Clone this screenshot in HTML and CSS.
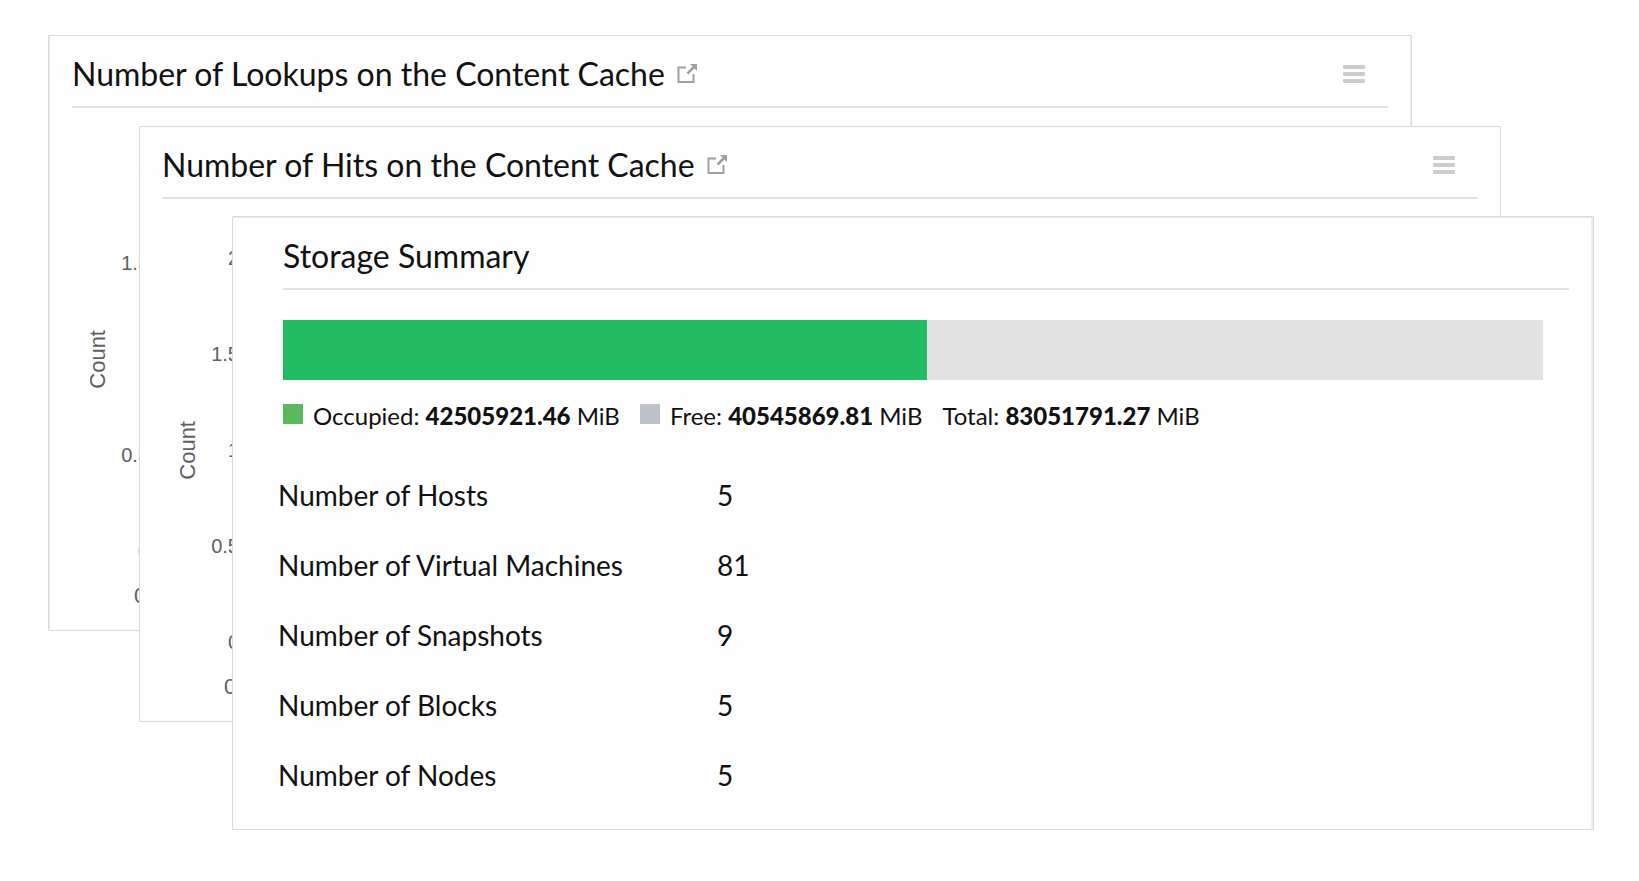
FILE: index.html
```html
<!DOCTYPE html>
<html lang="en">
<head>
<meta charset="utf-8">
<meta name="viewport" content="width=device-width, initial-scale=1">
<title>Storage Summary</title>
<link rel="stylesheet" href="styles.css">
</head>
<body>
<main class="stack">
  <section class="card card-back">
    <header class="card-header">
      <h2 class="card-title">Number of Lookups on the Content Cache</h2>
      <a class="open-link" href="#lookups" aria-label="Open lookups chart">
        <svg class="open-icon" viewBox="0 0 20 20" aria-hidden="true"><path d="M9 3.500H1.500v14.500h15v-8" fill="none" stroke="currentColor" stroke-width="2"/><path d="M10.500 9.500l7-7" stroke="currentColor" stroke-width="2.500"/><path d="M13 0h7v7z" fill="currentColor"/></svg>
      </a>
      <button class="menu-button" type="button" aria-label="Chart menu"><span class="menu-bar"></span><span class="menu-bar"></span><span class="menu-bar"></span></button>
    </header>
    <div class="chart" id="lookups">
      <div class="axis-title">Count</div>
      <div class="ticks"><span>2</span><span>1.5</span><span>1</span><span>0.5</span><span>0</span></div>
      <div class="time-label">0</div>
    </div>
  </section>

  <section class="card card-middle">
    <header class="card-header">
      <h2 class="card-title">Number of Hits on the Content Cache</h2>
      <a class="open-link" href="#hits" aria-label="Open hits chart">
        <svg class="open-icon" viewBox="0 0 20 20" aria-hidden="true"><path d="M9 3.500H1.500v14.500h15v-8" fill="none" stroke="currentColor" stroke-width="2"/><path d="M10.500 9.500l7-7" stroke="currentColor" stroke-width="2.500"/><path d="M13 0h7v7z" fill="currentColor"/></svg>
      </a>
      <button class="menu-button" type="button" aria-label="Chart menu"><span class="menu-bar"></span><span class="menu-bar"></span><span class="menu-bar"></span></button>
    </header>
    <div class="chart" id="hits">
      <div class="axis-title">Count</div>
      <div class="ticks"><span>2</span><span>1.5</span><span>1</span><span>0.5</span><span>0</span></div>
      <div class="time-label">0</div>
    </div>
  </section>

  <section class="card card-front">
    <header class="card-header">
      <h2 class="card-title">Storage Summary</h2>
    </header>
    <div class="usage-bar"><div class="usage-fill" style="width: 51.1%"></div></div>
    <div class="legend">
      <div class="legend-item"><span class="swatch swatch-occupied"></span><span>Occupied: <strong>42505921.46</strong> MiB</span></div>
      <div class="legend-item"><span class="swatch swatch-free"></span><span>Free: <strong>40545869.81</strong> MiB</span></div>
      <div class="legend-item"><span>Total: <strong>83051791.27</strong> MiB</span></div>
    </div>
    <table class="facts">
      <tbody>
        <tr><th scope="row">Number of Hosts</th><td>5</td></tr>
        <tr><th scope="row">Number of Virtual Machines</th><td>81</td></tr>
        <tr><th scope="row">Number of Snapshots</th><td>9</td></tr>
        <tr><th scope="row">Number of Blocks</th><td>5</td></tr>
        <tr><th scope="row">Number of Nodes</th><td>5</td></tr>
      </tbody>
    </table>
  </section>
</main>
</body>
</html>
```
FILE: styles.css
```css
* {
  box-sizing: border-box;
}

body {
  margin: 0;
  background: #fff;
  color: #111;
  font-family: Lato, "Open Sans", sans-serif;
}

/* The three cards share one grid cell and are fanned out by margins. */
.stack {
  display: grid;
  align-items: start;
  padding: 35px 45px 50px 48px;
}

.card {
  grid-area: 1 / 1;
  padding: 0 23px;
  border: 1px solid #d9d9d9;
  border-radius: 1px;
  background: #fefefe;
}

.card-back {
  margin-right: 182px;
  box-shadow: inset 1px 0 #eee, inset -1px 0 #eee;
}

.card-middle {
  margin: 91px 93px 0 91px;
  padding: 0 22px;
}

.card-front {
  margin: 181px 0 0 184px;
  padding: 1px 24px 19px 50px;
  box-shadow: inset -2px 0 #eee, inset 0 1px #eee;
}

.card-header {
  display: flex;
  align-items: center;
  height: 72px;
  padding-top: 6px;
  border-bottom: 2px solid #e2e2e2;
}

.card-title {
  margin: 0;
  font-size: 32px;
  font-weight: 400;
  line-height: 40px;
}

.open-link {
  margin-left: 12px;
  color: #9f9f9f;
}

.open-icon {
  display: block;
  width: 20px;
  height: 20px;
}

.menu-button {
  display: flex;
  flex-direction: column;
  gap: 3px;
  margin-left: auto;
  margin-right: 23px;
  padding: 0;
  border: 0;
  background: none;
}

.menu-bar {
  width: 22px;
  height: 4px;
  border-radius: 1px;
  background: #ccc;
}

.chart {
  display: grid;
  grid-template-columns: 24px 39px;
  row-gap: 21px;
  padding: 47px 0 22px 14px;
  color: #606060;
  font-family: "Liberation Sans", Arial, sans-serif;
  font-size: 20px;
  line-height: 24px;
}

.axis-title {
  justify-self: center;
  align-self: center;
  font-size: 22px;
  writing-mode: vertical-rl;
  transform: rotate(180deg);
}

.ticks {
  display: flex;
  flex-direction: column;
  gap: 72px;
  text-align: right;
}

.time-label {
  grid-column: 2;
  padding-left: 24px;
  font-size: 22px;
}

.usage-bar {
  height: 60px;
  margin: 30px 26px 0 0;
  background: #e1e1e1;
}

.usage-fill {
  height: 100%;
  background: #22bc62;
}

.legend {
  display: flex;
  gap: 20px;
  margin-top: 24px;
  font-size: 24px;
  line-height: 24px;
}

.legend-item {
  display: flex;
  gap: 10px;
}

.legend strong {
  font-weight: 900;
}

.swatch {
  width: 20px;
  height: 20px;
}

.swatch-occupied {
  background: #5cb85c;
}

.swatch-free {
  background: #bcc2c7;
}

.facts {
  margin: 32px 0 0 -5px;
  border-collapse: collapse;
  font-size: 28px;
  line-height: 34px;
}

.facts th,
.facts td {
  height: 70px;
  padding: 0;
  font-weight: 400;
  text-align: left;
}

.facts th {
  width: 439px;
}
```
